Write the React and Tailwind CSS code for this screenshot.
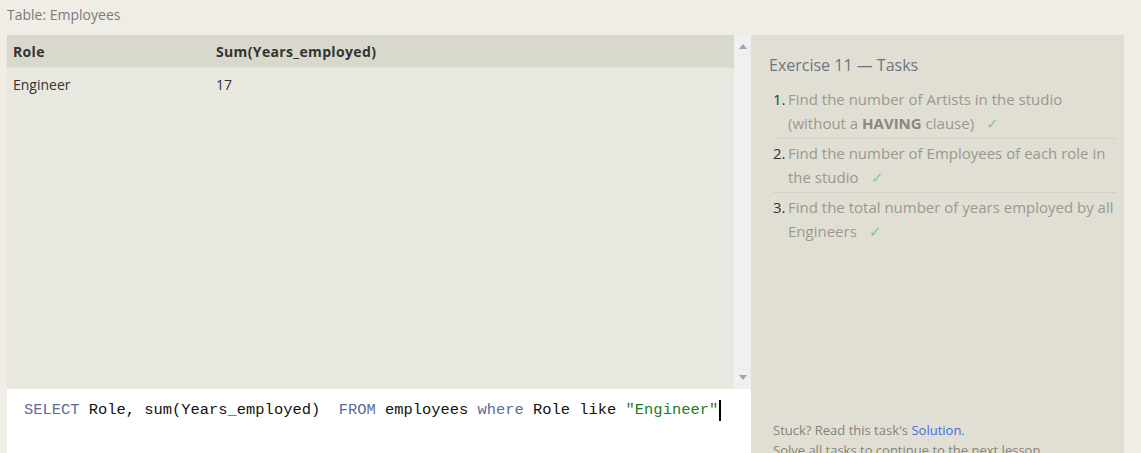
export default function App() {
  const tasks = [
    [<>Find the number of Artists in the studio (without a <b className="font-bold text-[#8a8880]">HAVING</b> clause)</>],
    [<>Find the number of Employees of each role in the studio</>],
    [<>Find the total number of years employed by all Engineers</>],
  ];
  return (
    <div className="w-[1141px] h-[453px] overflow-hidden bg-[#efede6] flex flex-col" style={{ fontFamily: '"Open Sans", "Noto Sans", sans-serif' }}>
      <div className="h-[35px] pl-[7px] pt-[4px] text-[14px] text-[#7a7a7a] leading-[22px]">Table: Employees</div>
      <div className="flex flex-1 pl-[7px] min-h-0">
        <div className="w-[744px] flex flex-col">
          <div className="h-[354px] flex">
            <div className="w-[727px] bg-[#e8e7e0] text-[14px] text-[#333]">
              <div className="h-[33px] bg-[#d9d8cc] flex items-center font-bold tracking-[0.35px] border-b border-[#e0dfd6]">
                <div className="w-[209px] pl-[6px]">Role</div>
                <div>Sum(Years_employed)</div>
              </div>
              <div className="h-[33px] flex items-center">
                <div className="w-[209px] pl-[6px]">Engineer</div>
                <div>17</div>
              </div>
            </div>
            <div className="w-[17px] bg-[#f0f0f0] flex flex-col justify-between items-center py-[9px]">
              <svg width="8" height="5" viewBox="0 0 8 5"><path d="M4 0L8 5H0Z" fill="#a3a3a3" /></svg>
              <svg width="8" height="5" viewBox="0 0 8 5"><path d="M0 0H8L4 5Z" fill="#a3a3a3" /></svg>
            </div>
          </div>
          <div className="flex-1 bg-white pl-[17px] pt-[10px]">
            <div className="text-[15.43px] leading-[22px] whitespace-pre flex items-center" style={{ fontFamily: '"Liberation Mono", monospace' }}>
              <span className="text-[#5b6b9a]">SELECT</span>
              <span className="text-[#111]"> Role, sum(Years_employed)  </span>
              <span className="text-[#5b6b9a]">FROM</span>
              <span className="text-[#111]"> employees </span>
              <span className="text-[#5b6b9a]">where</span>
              <span className="text-[#111]"> Role like </span>
              <span className="text-[#1e7b1e]">"Engineer"</span>
              <span className="inline-block w-[2px] h-[21px] bg-black ml-[1px]"></span>
            </div>
          </div>
        </div>
        <div className="w-[373px] bg-[#e1dfd4] flex flex-col pl-[18px] pr-[8px]">
          <div className="pt-[19px] text-[16px] text-[#6f7480] leading-[22px]">Exercise 11 — Tasks</div>
          <ol className="mt-[12px] ml-[4px]">
            {tasks.map((t, i) => (
              <li key={i} className={"flex text-[15px] leading-[23.5px] pb-[3px] mb-[3px] " + (i < 2 ? "border-b border-[#d3d1c6]" : "")}>
                <span className="w-[15px] text-[#333] shrink-0">{i + 1}.</span>
                <span className="text-[#9a9890]">
                  {t}
                  <span className="text-[#86c78f] ml-[12px]">✓</span>
                </span>
              </li>
            ))}
          </ol>
          <div className="mt-auto pl-[4px] text-[13px] text-[#858378] leading-[20px] translate-y-[7px]">
            <div>Stuck? Read this task's <span className="text-[#3f6ee6]">Solution</span>.</div>
            <div>Solve all tasks to continue to the next lesson.</div>
          </div>
        </div>
      </div>
    </div>
  );
}
